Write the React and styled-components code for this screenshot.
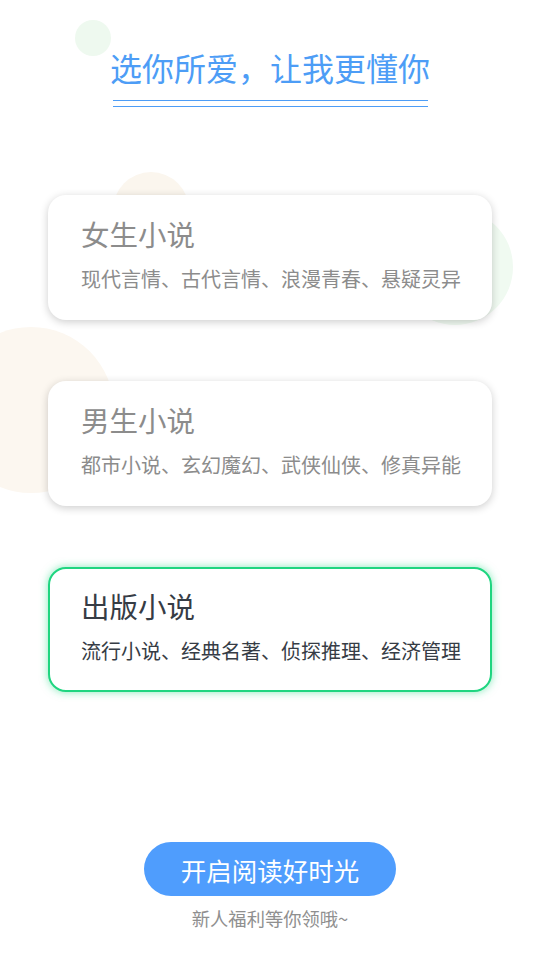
import React from "react";
import styled, { createGlobalStyle } from "styled-components";

// -------------------------------STYLES
const GlobalStyle = createGlobalStyle`
  body {
    margin: 0;
    background: #ffffff;
    font-family: "Noto Sans CJK SC", "Noto Sans", sans-serif;
  }
`;

const Page = styled.div`
  position: relative;
  width: 540px;
  height: 960px;
  overflow: hidden;
  display: flex;
  flex-direction: column;
  align-items: center;
  padding-top: 45px;
  box-sizing: border-box;
`;

const Bubble = styled.div`
  position: absolute;
  border-radius: 50%;
  background: ${p => p.color};
  width: ${p => p.size}px;
  height: ${p => p.size}px;
  left: ${p => p.x}px;
  top: ${p => p.y}px;
  z-index: 0;
`;

const Heading = styled.h1`
  position: relative;
  z-index: 1;
  margin: 0;
  font-size: 32px;
  line-height: 44px;
  font-weight: 400;
  color: #4d9df6;
`;

const Underline = styled.div`
  width: 315px;
  height: 5px;
  margin-top: 11px;
  border-top: 1px solid #4d9df6;
  border-bottom: 1px solid #4d9df6;
`;

const CardList = styled.div`
  position: relative;
  z-index: 1;
  display: flex;
  flex-direction: column;
  gap: 61px;
  margin-top: 88px;
`;

const Card = styled.div`
  width: 444px;
  height: 125px;
  box-sizing: border-box;
  border-radius: 18px;
  background: #ffffff;
  padding: 17px 0 0 31px;
  border: 2px solid ${p => (p.active ? "#1fd580" : "transparent")};
  box-shadow: ${p =>
    p.active
      ? "0 0 9px rgba(31, 213, 128, 0.55)"
      : "0 2px 9px rgba(0, 0, 0, 0.2)"};
`;

const CardTitle = styled.div`
  font-size: 28.5px;
  line-height: 40px;
  color: ${p => (p.active ? "#363c45" : "#8c8c8c")};
`;

const CardTags = styled.div`
  margin-top: 11px;
  font-size: 20px;
  line-height: 28px;
  color: ${p => (p.active ? "#363c45" : "#8c8c8c")};
  white-space: nowrap;
`;

const StartButton = styled.button`
  margin-top: 150px;
  width: 252px;
  height: 54px;
  border: none;
  border-radius: 27px;
  background: #4f9dfd;
  color: #ffffff;
  font-family: inherit;
  font-size: 25.5px;
  cursor: pointer;
`;

const Hint = styled.p`
  margin: 10px 0 0;
  font-size: 18.3px;
  line-height: 24px;
  color: #8f8f8f;
`;

// -------------------------------DATA
const genres = [
  { name: "女生小说", tags: "现代言情、古代言情、浪漫青春、悬疑灵异" },
  { name: "男生小说", tags: "都市小说、玄幻魔幻、武侠仙侠、修真异能" },
  { name: "出版小说", tags: "流行小说、经典名著、侦探推理、经济管理", active: true }
];

// -------------------------------COMPONENT
const App = () => {
  return (
    <Page>
      <GlobalStyle />
      <Bubble color="#eef9ef" size={36} x={75} y={20} />
      <Bubble color="#fbf6ee" size={76} x={113} y={172} />
      <Bubble color="#f0faf1" size={116} x={397} y={209} />
      <Bubble color="#fcf7f0" size={166} x={-52} y={327} />
      <Heading>选你所爱，让我更懂你</Heading>
      <Underline />
      <CardList>
        {genres.map(g => (
          <Card key={g.name} active={g.active}>
            <CardTitle active={g.active}>{g.name}</CardTitle>
            <CardTags active={g.active}>{g.tags}</CardTags>
          </Card>
        ))}
      </CardList>
      <StartButton>开启阅读好时光</StartButton>
      <Hint>新人福利等你领哦~</Hint>
    </Page>
  );
};

export default App;
